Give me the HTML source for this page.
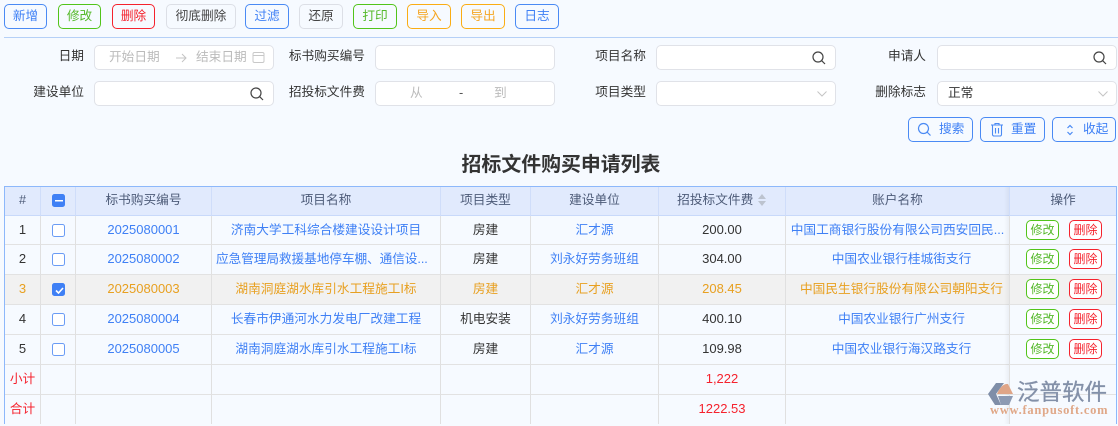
<!DOCTYPE html>
<html lang="zh"><head><meta charset="utf-8">
<style>
*{box-sizing:border-box}
html,body{margin:0;padding:0}
body{width:1118px;height:426px;overflow:hidden;position:relative;background:#f6faff;font-family:"Liberation Sans","Noto Sans CJK SC",sans-serif;font-size:12.7px;color:#333}
.a{position:absolute}
.b{position:absolute;top:4px;height:25px;border:1px solid;border-radius:5px;background:transparent;text-align:center;line-height:23px;font-size:12.7px}
.bl{color:#3f80f5;border-color:#4a8af4}.gr{color:#55b92a;border-color:#52c41a}.rd{color:#f5222d;border-color:#f5222d}
.gy{color:#444;border-color:#dcdfe6}.or{color:#f5a623;border-color:#faad14}
.l{position:absolute;text-align:right;line-height:23px;height:25px;color:#333}
.i{position:absolute;height:25px;background:#fff;border:1px solid #e0e2e8;border-radius:5px;line-height:23px;color:#bbb}
.i svg{position:absolute;fill:none}
table{position:absolute;left:4px;top:186px;width:1113px;border-collapse:separate;border-spacing:0;table-layout:fixed;border:1px solid #8db8fb;border-bottom:0}
td,th{border-right:1px solid #e0e0e0;border-bottom:1px solid #e2e2e2;text-align:center;padding:0 0 1px 0;height:30px;font-weight:normal;white-space:nowrap;overflow:hidden;font-size:12.7px;line-height:18px;vertical-align:middle}
th{background:#e1eafd;color:#4d5b78;height:29px;padding-bottom:3px;border-right:1px solid #cfddfa;border-bottom:1px solid #c8d9fa}
td:last-child,th:last-child{border-right:0}
tr.f td{height:29px}
tr.e td{border-bottom:0;height:29px}
.n{font-size:13px}
.p{padding-left:8px}
td.lf{text-align:left;padding-left:4px;letter-spacing:-.1px}
.k{color:#3f80f5}.o td{background:#f1f1f1;color:#e8a020}
.o .k{color:#e8a020}
.r{color:#f5222d}
.ac{padding-left:2px}
.cb{display:inline-block;width:13px;height:13px;border:1px solid #6a9cf5;border-radius:2.5px;background:#fff;vertical-align:middle;position:relative;top:0}
.on{background:#3f80f5;border-color:#3f80f5}
.m{display:inline-block;width:33px;height:20px;line-height:18px;border:1px solid #52c41a;border-radius:5px;font-size:12px;color:#55b92a;background:#fff;vertical-align:middle}
.m.d{border-color:#f5222d;color:#f5222d;margin-left:10px}
.sh{position:absolute;left:1004px;top:187px;width:5px;height:237px;background:linear-gradient(to right,rgba(0,0,0,0),rgba(0,0,0,.045))}
</style></head>
<body>
<div class="b bl" style="left:4px;width:43px">新增</div>
<div class="b gr" style="left:58px;width:43px">修改</div>
<div class="b rd" style="left:112px;width:43px">删除</div>
<div class="b gy" style="left:166px;width:70px">彻底删除</div>
<div class="b bl" style="left:245px;width:44px">过滤</div>
<div class="b gy" style="left:299px;width:44px">还原</div>
<div class="b gr" style="left:353px;width:44px">打印</div>
<div class="b or" style="left:407px;width:44px">导入</div>
<div class="b or" style="left:461px;width:44px">导出</div>
<div class="b bl" style="left:515px;width:44px">日志</div>
<div class="a" style="left:4px;top:37px;width:1114px;height:1px;background:#b5d0f7"></div>

<div class="l" style="left:20px;width:64px;top:45px">日期</div>
<div class="i" style="left:94px;top:45px;width:180px">
<span class="a" style="left:14px;top:0">开始日期</span>
<svg style="left:79px;top:5px" width="14" height="14" viewBox="0 0 14 14" stroke="#c4c4c4"><path d="M2 7h10M8 3l4 4-4 4"/></svg>
<span class="a" style="left:101px;top:0">结束日期</span>
<svg style="left:157px;top:5px" width="13" height="13" viewBox="0 0 13 13" stroke="#c8c8c8"><rect x="1" y="1.5" width="11" height="10" rx="1.5"/><path d="M1 4.5h11"/></svg>
</div>
<div class="l" style="left:280px;width:85px;top:45px">标书购买编号</div>
<div class="i" style="left:375px;top:45px;width:180px"></div>
<div class="l" style="left:580px;width:66px;top:45px">项目名称</div>
<div class="i" style="left:656px;top:45px;width:180px"><svg style="left:154px;top:4px" width="16" height="16" viewBox="0 0 16 16" stroke="#444" stroke-width="1.2"><circle cx="7" cy="7" r="5"/><path d="M10.7 10.7L14 14"/></svg></div>
<div class="l" style="left:860px;width:66px;top:45px">申请人</div>
<div class="i" style="left:937px;top:45px;width:180px"><svg style="left:154px;top:4px" width="16" height="16" viewBox="0 0 16 16" stroke="#444" stroke-width="1.2"><circle cx="7" cy="7" r="5"/><path d="M10.7 10.7L14 14"/></svg></div>

<div class="l" style="left:20px;width:64px;top:81px">建设单位</div>
<div class="i" style="left:94px;top:81px;width:180px"><svg style="left:154px;top:4px" width="16" height="16" viewBox="0 0 16 16" stroke="#444" stroke-width="1.2"><circle cx="7" cy="7" r="5"/><path d="M10.7 10.7L14 14"/></svg></div>
<div class="l" style="left:280px;width:85px;top:81px">招投标文件费</div>
<div class="i" style="left:375px;top:81px;width:180px">
<span class="a" style="left:34px;top:0">从</span><span class="a" style="left:83px;top:0;color:#555">-</span><span class="a" style="left:118px;top:0">到</span></div>
<div class="l" style="left:580px;width:66px;top:81px">项目类型</div>
<div class="i" style="left:656px;top:81px;width:180px"><svg style="left:159px;top:8px" width="12" height="8" viewBox="0 0 12 8" stroke="#c4c4c4"><path d="M1.5 1.5L6 6l4.5-4.5"/></svg></div>
<div class="l" style="left:860px;width:66px;top:81px">删除标志</div>
<div class="i" style="left:937px;top:81px;width:180px;color:#333"><span class="a" style="left:10px;top:0">正常</span><svg style="left:159px;top:8px" width="12" height="8" viewBox="0 0 12 8" stroke="#c4c4c4"><path d="M1.5 1.5L6 6l4.5-4.5"/></svg></div>

<div class="b bl" style="left:908px;top:117px;width:65px;text-align:left;padding-left:30px">搜索
<svg class="a" style="left:8px;top:4px" width="15" height="15" viewBox="0 0 15 15" fill="none" stroke="#4a8af4" stroke-width="1.2"><circle cx="6.5" cy="6.5" r="5"/><path d="M10 10l3.5 3.5"/></svg></div>
<div class="b bl" style="left:980px;top:117px;width:65px;text-align:left;padding-left:30px">重置
<svg class="a" style="left:9px;top:4px" width="14" height="15" viewBox="0 0 14 15" fill="none" stroke="#4a8af4" stroke-width="1.1"><path d="M1 3h12M5 3V1.5h4V3M2.5 3v9.5a1.5 1.5 0 0 0 1.5 1.5h6a1.5 1.5 0 0 0 1.5-1.5V3M5.5 6v5.5M8.5 6v5.5"/></svg></div>
<div class="b bl" style="left:1052px;top:117px;width:64px;text-align:left;padding-left:30px">收起
<svg class="a" style="left:11px;top:5px" width="12" height="14" viewBox="0 0 12 14" fill="none" stroke="#4a8af4" stroke-width="1.2"><path d="M3.5 5L6 2.5 8.5 5M3.5 9L6 11.5 8.5 9"/></svg></div>

<div class="a" style="left:0;width:1118px;top:151px;text-align:center;margin-left:2px;font-size:19.9px;font-weight:bold;line-height:28px;color:#333">招标文件购买申请列表</div>

<table>
<colgroup><col style="width:36px"><col style="width:35px"><col style="width:136px"><col style="width:229px"><col style="width:90px"><col style="width:128px"><col style="width:127px"><col style="width:224px"><col></colgroup>
<tr><th>#</th><th><span class="cb on"><svg class="a" style="left:2px;top:5px" width="8" height="2"><rect width="8" height="1.5" fill="#fff"/></svg></span></th><th>标书购买编号</th><th>项目名称</th><th>项目类型</th><th>建设单位</th><th>招投标文件费 <svg width="10" height="14" viewBox="0 0 10 14" style="vertical-align:-3px"><path d="M5 1L9 6H1zM5 13L1 8h8z" fill="#bcc3cf"/></svg></th><th>账户名称</th><th>操作</th></tr>
<tr class="f"><td class="n">1</td><td><span class="cb"></span></td><td class="k n">2025080001</td><td class="k">济南大学工科综合楼建设设计项目</td><td>房建</td><td class="k">汇才源</td><td class="n">200.00</td><td class="k">中国工商银行股份有限公司西安回民...</td><td class="ac"><span class="m">修改</span><span class="m d">删除</span></td></tr>
<tr><td class="n">2</td><td><span class="cb"></span></td><td class="k n">2025080002</td><td class="k lf">应急管理局救援基地停车棚、通信设...</td><td>房建</td><td class="k">刘永好劳务班组</td><td class="n">304.00</td><td class="k p">中国农业银行桂城街支行</td><td class="ac"><span class="m">修改</span><span class="m d">删除</span></td></tr>
<tr class="o"><td class="n">3</td><td><span class="cb on"><svg class="a" style="left:2px;top:3px" width="9" height="7" viewBox="0 0 9 7" fill="none" stroke="#fff" stroke-width="1.6"><path d="M1 3.5L3.5 6 8 1"/></svg></span></td><td class="k n">2025080003</td><td class="k">湖南洞庭湖水库引水工程施工I标</td><td>房建</td><td class="k">汇才源</td><td class="n">208.45</td><td class="k p">中国民生银行股份有限公司朝阳支行</td><td class="ac"><span class="m">修改</span><span class="m d">删除</span></td></tr>
<tr><td class="n">4</td><td><span class="cb"></span></td><td class="k n">2025080004</td><td class="k">长春市伊通河水力发电厂改建工程</td><td>机电安装</td><td class="k">刘永好劳务班组</td><td class="n">400.10</td><td class="k p">中国农业银行广州支行</td><td class="ac"><span class="m">修改</span><span class="m d">删除</span></td></tr>
<tr><td class="n">5</td><td><span class="cb"></span></td><td class="k n">2025080005</td><td class="k">湖南洞庭湖水库引水工程施工I标</td><td>房建</td><td class="k">汇才源</td><td class="n">109.98</td><td class="k p">中国农业银行海汉路支行</td><td class="ac"><span class="m">修改</span><span class="m d">删除</span></td></tr>
<tr><td class="r">小计</td><td></td><td></td><td></td><td></td><td></td><td class="r n">1,222</td><td></td><td></td></tr>
<tr class="e"><td class="r">合计</td><td></td><td></td><td></td><td></td><td></td><td class="r n">1222.53</td><td></td><td></td></tr>
</table>
<div class="sh"></div>

<svg class="a" style="left:988px;top:383px" width="25" height="22" viewBox="0 0 25 22">
<path d="M8 0h8L8 11l5 11H7L0 11z" fill="#7f8ea8"/><path d="M18 1h2l5 10H9C11 6 14 2 18 1z" fill="#dfa587"/><path d="M10 13h15l-4 9H13z" fill="#8c9ab3"/>
</svg>
<div class="a" style="left:1017px;top:380px;font-size:22.5px;line-height:26px;color:#8390a8;white-space:nowrap;-webkit-text-stroke:.3px #8390a8">泛普软件</div>
<div class="a" style="left:990px;top:403px;font-family:'Liberation Serif',serif;font-size:12.5px;line-height:14px;letter-spacing:.75px;color:#e0a888;font-weight:bold;white-space:nowrap">www.fanpusoft.com</div>
</body></html>
